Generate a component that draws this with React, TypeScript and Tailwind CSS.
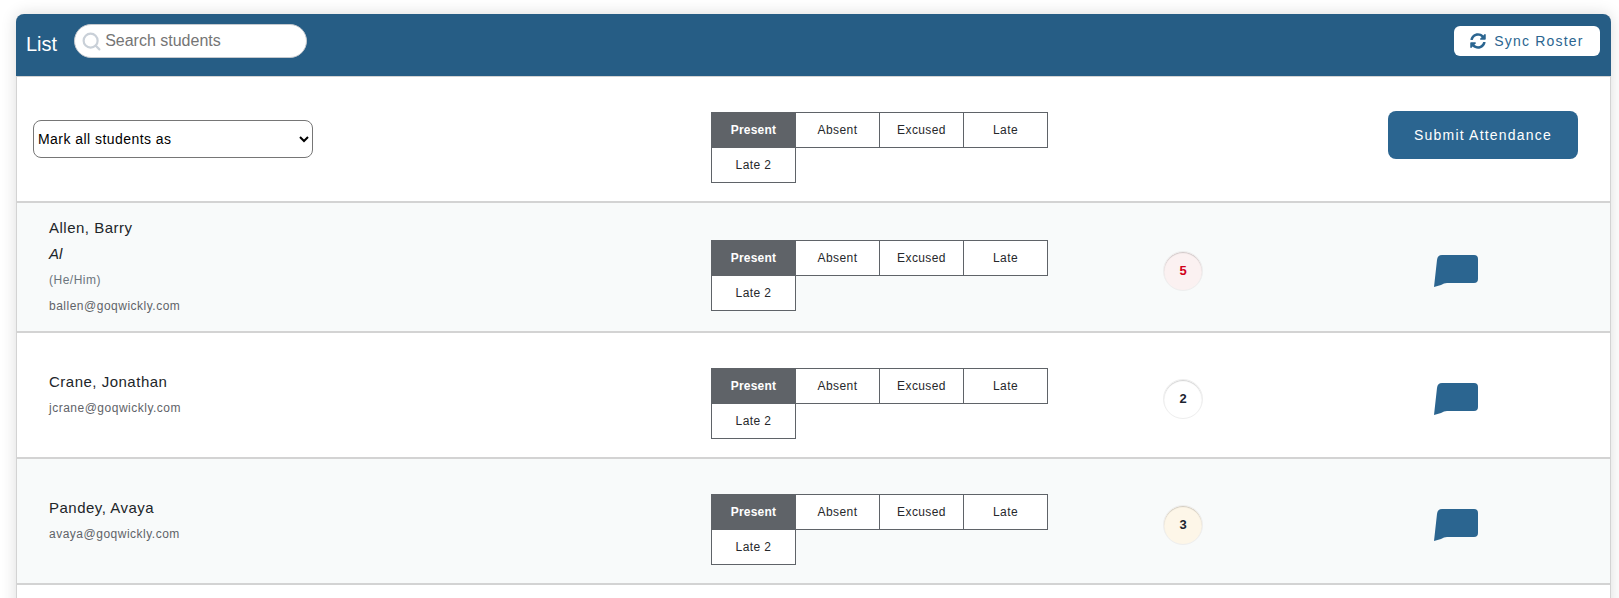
import { Search } from "lucide-react";
import { FaSyncAlt } from "react-icons/fa";

interface Student {
  name: string;
  nickname?: string;
  pronouns?: string;
  email: string;
  count: number;
  badgeClass: string;
  rowClass: string;
}

const students: Student[] = [
  {
    name: "Allen, Barry",
    nickname: "Al",
    pronouns: "(He/Him)",
    email: "ballen@goqwickly.com",
    count: 5,
    badgeClass: "bg-[#fbf1f1] text-[#d0021b]",
    rowClass: "h-[130px] bg-[#f8fafa]",
  },
  {
    name: "Crane, Jonathan",
    email: "jcrane@goqwickly.com",
    count: 2,
    badgeClass: "bg-white text-[#1c2430]",
    rowClass: "h-[126px] bg-white",
  },
  {
    name: "Pandey, Avaya",
    email: "avaya@goqwickly.com",
    count: 3,
    badgeClass: "bg-[#fdf6e8] text-[#1c2430]",
    rowClass: "h-[126px] bg-[#f8fafa]",
  },
];

const statuses = ["Present", "Absent", "Excused", "Late", "Late 2"];

function StatusPicker() {
  return (
    <div className="mt-[17px] grid w-[337px] grid-cols-[repeat(4,84px)] auto-rows-[35px] pl-px pt-px">
      {statuses.map((status, i) => (
        <button
          key={status}
          className={`-ml-px -mt-px flex items-center justify-center border border-[#5f6368] text-[12px] ${
            i === 0 ? "bg-[#5f6368] font-bold tracking-[0.2px] text-white" : "bg-white tracking-[0.4px] text-[#26282b]"
          }`}
        >
          {status}
        </button>
      ))}
    </div>
  );
}

function CommentIcon() {
  return (
    <svg width="44" height="32" viewBox="0 0 44 32" fill="#2b6590">
      <path d="M8 0H40a4 4 0 0 1 4 4V24a4 4 0 0 1-4 4H13Q10 28 7 30L0 32L3 5Q3.500 0 8 0Z" />
    </svg>
  );
}

export default function App() {
  return (
    <div className="h-screen overflow-hidden bg-white pl-4 pr-2 pt-[14px] font-['Liberation_Sans',Arial,sans-serif]">
      <div className="h-[700px] rounded-t-lg border-x border-[#d3d3d3] bg-white shadow-[0_0_16px_rgba(0,0,0,0.14)]">
        {/* Header */}
        <header className="-mx-px flex h-[63px] items-center justify-between rounded-t-lg border-b border-[#d3d3d3] bg-[#265d85] pb-[8px] pl-[10px] pr-[11px]">
          <div className="flex items-center gap-[17px]">
            <h1 className="mt-[5px] text-xl text-white">List</h1>
            <div className="flex h-[34px] w-[233px] items-center gap-[3px] rounded-full border border-[#c5c9ce] bg-white pl-[6px]">
              <Search size={21} strokeWidth={2.5} className="shrink-0 text-[#c9d0d8]" />
              <input
                placeholder="Search students"
                className="w-full bg-transparent text-base text-[#333] outline-none placeholder:text-[#757575]"
              />
            </div>
          </div>
          <button className="flex h-[30px] w-[146px] items-center justify-center gap-2 rounded-md bg-white text-sm tracking-[1.2px] text-[#2b6590]">
            <FaSyncAlt size={16} />
            Sync Roster
          </button>
        </header>

        {/* Mark all */}
        <div className="grid h-[126px] grid-cols-[694px_677px_1fr] items-center border-b-2 border-[#d3d3d3]">
          <div className="pl-4">
            <select className="h-[38px] w-[280px] rounded-lg border border-[#767676] bg-white text-sm tracking-[0.45px] text-black">
              <option>Mark all students as</option>
            </select>
          </div>
          <StatusPicker />
          <button className="mb-[9px] h-[48px] w-[190px] rounded-lg bg-[#2b6590] text-sm tracking-[1.2px] text-white">
            Submit Attendance
          </button>
        </div>

        {/* Students */}
        {students.map((s) => (
          <div
            key={s.email}
            className={`grid grid-cols-[694px_452px_271px_1fr] items-center border-b-2 border-[#d3d3d3] ${s.rowClass}`}
          >
            <div className="pl-8">
              <div className="text-[15px] leading-[26px] tracking-[0.5px] text-[#212529]">{s.name}</div>
              {s.nickname && <div className="text-[15px] italic leading-[26px] text-[#212529]">{s.nickname}</div>}
              {s.pronouns && <div className="text-[12px] leading-[26px] tracking-[0.5px] text-[#6c757d]">{s.pronouns}</div>}
              <div className="text-[12px] leading-[26px] tracking-[0.5px] text-[#5f6368]">{s.email}</div>
            </div>
            <StatusPicker />
            <div
              className={`mt-2 flex h-10 w-10 items-center justify-center rounded-full border border-[#eeeeee] text-[13px] font-bold shadow-[inset_0_1px_1px_rgba(0,0,0,0.18)] ${s.badgeClass}`}
            >
              {s.count}
            </div>
            <div className="mt-2 flex">
              <CommentIcon />
            </div>
          </div>
        ))}
      </div>
    </div>
  );
}
